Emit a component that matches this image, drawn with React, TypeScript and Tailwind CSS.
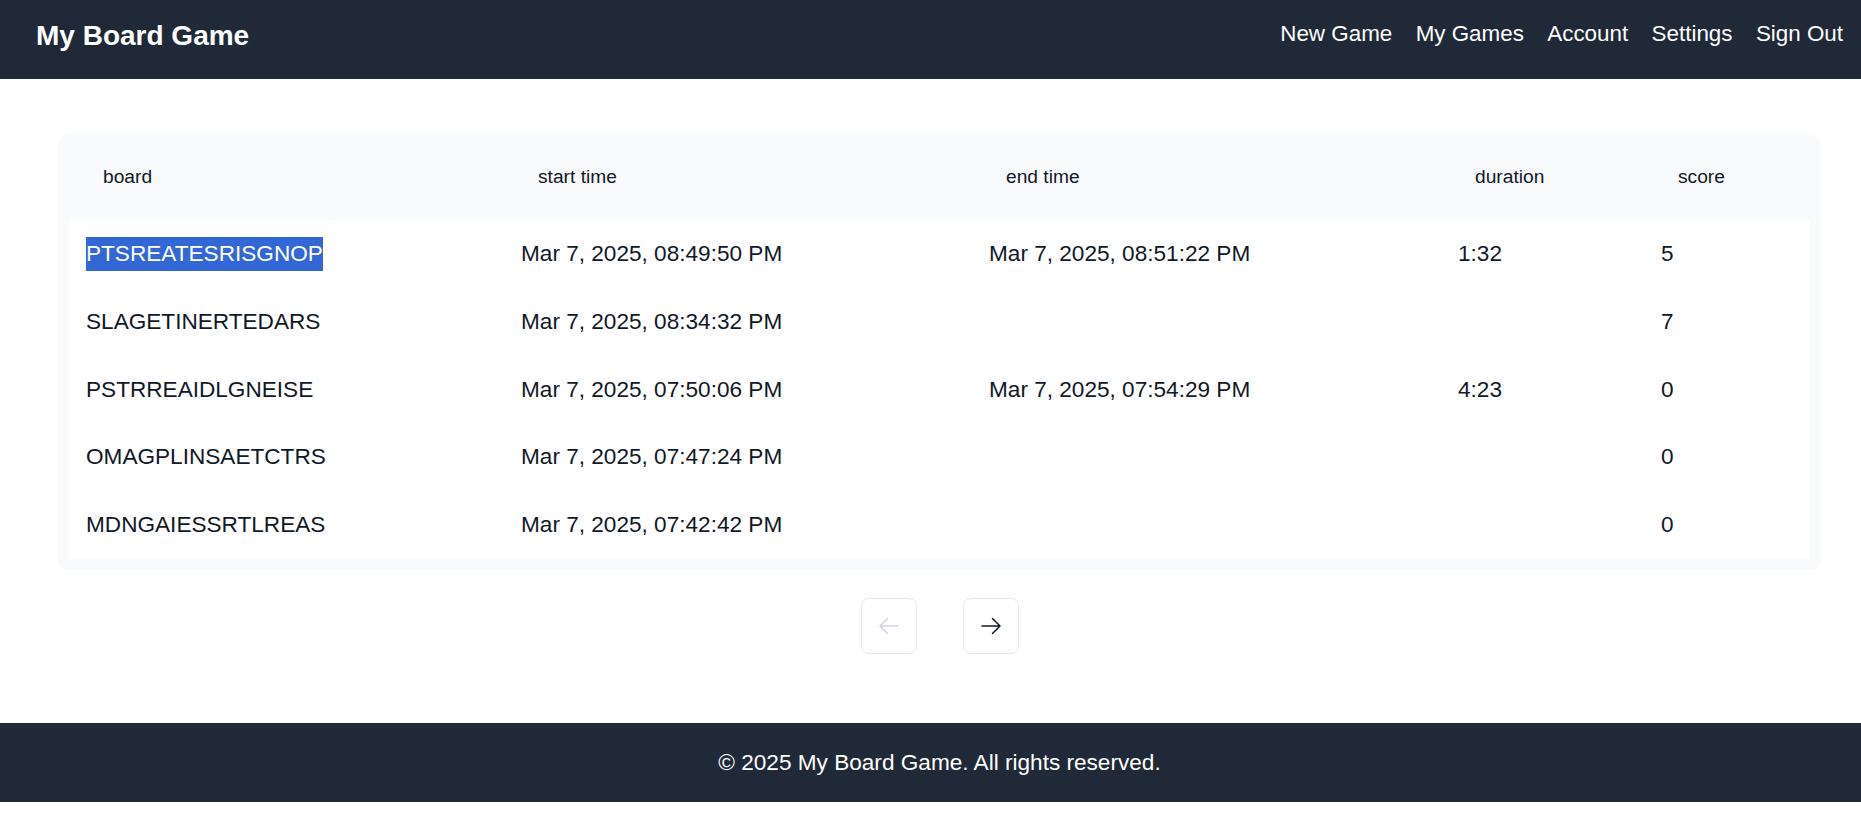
const games = [
  { board: "PTSREATESRISGNOP", start: "Mar 7, 2025, 08:49:50 PM", end: "Mar 7, 2025, 08:51:22 PM", duration: "1:32", score: "5" },
  { board: "SLAGETINERTEDARS", start: "Mar 7, 2025, 08:34:32 PM", end: "", duration: "", score: "7" },
  { board: "PSTRREAIDLGNEISE", start: "Mar 7, 2025, 07:50:06 PM", end: "Mar 7, 2025, 07:54:29 PM", duration: "4:23", score: "0" },
  { board: "OMAGPLINSAETCTRS", start: "Mar 7, 2025, 07:47:24 PM", end: "", duration: "", score: "0" },
  { board: "MDNGAIESSRTLREAS", start: "Mar 7, 2025, 07:42:42 PM", end: "", duration: "", score: "0" },
];

const cols = "grid grid-cols-[435px_468px_469px_203px_1fr]";

function Arrow({ dir, className }: { dir: "left" | "right"; className: string }) {
  return (
    <svg
      viewBox="0 0 24 24"
      fill="none"
      stroke="currentColor"
      strokeWidth={1.5}
      className={className}
    >
      {dir === "right" ? (
        <path strokeLinecap="round" strokeLinejoin="round" d="M13.5 4.5 21 12m0 0-7.5 7.5M21 12H3" />
      ) : (
        <path strokeLinecap="round" strokeLinejoin="round" d="M10.5 19.5 3 12m0 0 7.5-7.5M3 12h18" />
      )}
    </svg>
  );
}

export default function App() {
  return (
    <div className="w-screen overflow-hidden font-['Liberation_Sans',Arial,sans-serif]">
      <div className="w-[1879px]">
        <header className="h-[79px] bg-[#1f2937] px-9 pt-5 flex items-start justify-between text-white">
          <div className="text-[28px] font-bold leading-[32px]">My Board Game</div>
          <nav className="flex gap-[23.4px] text-[22.4px] leading-[28px]">
            <a>New Game</a>
            <a>My Games</a>
            <a>Account</a>
            <a>Settings</a>
            <a>Sign Out</a>
          </nav>
        </header>

        <main className="px-[58px] pt-[56px] pb-[69px]">
          <div className="bg-[#f9fafb] rounded-[10px] px-[11px] pb-[11px]">
            <div className={`${cols} h-[85px] items-center text-[19.2px] leading-[28.8px] text-[#111827]`}>
              <div className="pl-[34px]">board</div>
              <div className="pl-[34px]">start time</div>
              <div className="pl-[34px]">end time</div>
              <div className="pl-[34px]">duration</div>
              <div className="pl-[34px]">score</div>
            </div>
            <div className="bg-white text-[22.6px] leading-[33.6px] text-[#111827]">
              {games.map((g, i) => (
                <div key={g.board} className={`${cols} h-[67.8px] items-center`}>
                  <div className="pl-[17px]">
                    {i === 0 ? (
                      <span className="inline-block bg-[#3367d6] text-white">{g.board}</span>
                    ) : (
                      g.board
                    )}
                  </div>
                  <div className="pl-[17px]">{g.start}</div>
                  <div className="pl-[17px]">{g.end}</div>
                  <div className="pl-[17px]">{g.duration}</div>
                  <div className="pl-[17px]">{g.score}</div>
                </div>
              ))}
            </div>
          </div>

          <div className="mt-[28px] flex justify-center gap-[46px]">
            <button className="w-14 h-14 flex items-center justify-center border border-[#e5e7eb] rounded-lg text-[#d1d5db]">
              <Arrow dir="left" className="w-6 h-6" />
            </button>
            <button className="w-14 h-14 flex items-center justify-center border border-[#e5e7eb] rounded-lg text-[#111827]">
              <Arrow dir="right" className="w-6 h-6" />
            </button>
          </div>
        </main>

        <footer className="h-[79px] bg-[#1f2937] flex items-center justify-center text-white text-[22.6px]">
          © 2025 My Board Game. All rights reserved.
        </footer>
      </div>
    </div>
  );
}
